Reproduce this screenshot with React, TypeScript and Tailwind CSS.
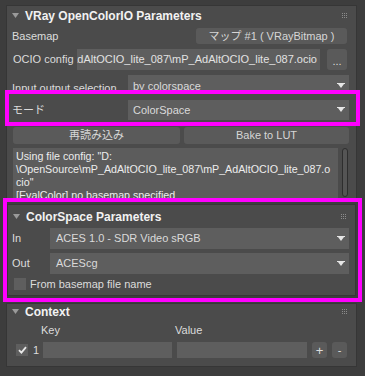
import React from "react";

const font = "font-['Liberation_Sans','Noto_Sans_CJK_JP',sans-serif]";

const Caret = () => (
  <svg width="7" height="6" viewBox="0 0 7 6" className="shrink-0">
    <polygon points="0,0 7,0 3.5,5" fill="#9a9a9a" />
  </svg>
);

const DropArrow = () => (
  <svg width="8" height="6" viewBox="0 0 8 6" className="shrink-0">
    <rect x="0" y="0" width="8" height="1" fill="#e6e6e6" />
    <polygon points="1,1 7,1 4,5" fill="#e6e6e6" />
  </svg>
);

const GripDots = () => (
  <svg width="6" height="6" viewBox="0 0 6 6" className="shrink-0">
    {[0, 2, 4].map((y) =>
      [0, 2, 4].map((x) => (
        <rect key={`${x}-${y}`} x={x} y={y} width="1" height="1" fill="#8c8c8c" />
      ))
    )}
  </svg>
);

const Dropdown: React.FC<{ value: string; className: string }> = ({ value, className }) => (
  <div
    className={`flex shrink-0 items-center justify-between bg-[#5e5e5e] pl-[5px] pr-[4px] text-[11px] text-[#dadada] ${className}`}
  >
    <span className="whitespace-nowrap">{value}</span>
    <DropArrow />
  </div>
);

const RolloutTitle: React.FC<{ title: string; className: string }> = ({ title, className }) => (
  <div className={`flex items-center pl-[5px] pr-[8px] ${className}`}>
    <Caret />
    <span className="ml-[6px] flex-1 text-[12px] font-bold text-[#f2f2f2]">{title}</span>
    <GripDots />
  </div>
);

export default function App() {
  return (
    <div className={`h-[376px] w-[365px] overflow-hidden bg-[#3d3d3d] pt-[5px] ${font}`}>
      {/* VRay OpenColorIO Parameters */}
      <div className="ml-[6px] h-[193px] w-[351px] border-x border-t border-[#363636] bg-[#4b4b4b]">
        <RolloutTitle title="VRay OpenColorIO Parameters" className="h-[20px]" />

        <div className="mt-[2px] flex h-[16px] items-center justify-between pl-[5px] pr-[9px] text-[11px] text-[#dcdcdc]">
          <span>Basemap</span>
          <div className="flex h-[16px] w-[151px] shrink-0 items-center justify-center rounded-[3px] bg-[#5a5a5a] text-[#d6d6d6]">
            マップ #1 ( VRayBitmap )
          </div>
        </div>

        <div className="mt-[5px] flex h-[21px] items-center pl-[6px] pr-[9px] text-[11px] text-[#dcdcdc]">
          <span className="w-[64px] shrink-0 whitespace-nowrap">OCIO config</span>
          <div className="flex h-[21px] w-[243px] shrink-0 items-center justify-end overflow-hidden bg-[#5e5e5e] pr-[3px] text-[#e2e2e2]">
            <span className="whitespace-nowrap">AdAltOCIO_lite_087\mP_AdAltOCIO_lite_087.ocio</span>
          </div>
          <div className="ml-[7px] flex h-[21px] w-[20px] shrink-0 items-end justify-center rounded-[3px] bg-[#5a5a5a] pb-[3px] leading-none text-[#dcdcdc]">
            ...
          </div>
        </div>

        <div className="mt-[5px] flex h-[15px] items-start justify-between pl-[5px] pr-[7px] text-[11px] text-[#dcdcdc]">
          <span className="mt-[5px] whitespace-nowrap">Input output selection</span>
          <Dropdown value="by colorspace" className="h-[22px] w-[221px]" />
        </div>

        <div className="relative -ml-[2px] -mr-[4px] flex h-[36px] items-center border-4 border-[#ff00ff] bg-[#4b4b4b] pt-[4px] pl-[3px] pr-[7px] text-[11px] text-[#dcdcdc]">
          <span className="flex-1">モード</span>
          <Dropdown value="ColorSpace" className="h-[20px] w-[221px]" />
        </div>

        <div className="mt-[1px] flex h-[17px] gap-[4px] pl-[6px] pr-[7px] text-[11px] text-[#d6d6d6]">
          <div className="flex w-[167px] items-center justify-center rounded-[3px] bg-[#5a5a5a]">再読み込み</div>
          <div className="flex w-[165px] items-center justify-center rounded-[3px] bg-[#5a5a5a]">Bake to LUT</div>
        </div>

        <div className="mt-[4px] flex h-[50px] gap-[4px] pl-[6px]">
          <div className="h-[50px] w-[325px] shrink-0 overflow-hidden bg-[#5c5c5c] pl-[3px] pt-[2px] text-[10.7px] leading-[13px] text-[#ececec]">
            <div className="whitespace-nowrap">Using file config: "D:</div>
            <div className="whitespace-nowrap">\OpenSource\mP_AdAltOCIO_lite_087\mP_AdAltOCIO_lite_087.o</div>
            <div className="whitespace-nowrap">cio"</div>
            <div className="whitespace-nowrap">[EvalColor] no basemap specified</div>
          </div>
          <div className="h-[49px] w-[6px] shrink-0 rounded-full border border-[#2e2e2e] bg-[#555555]" />
        </div>
      </div>

      {/* ColorSpace Parameters, highlighted */}
      <div className="ml-[3px] h-[104px] w-[359px] border-4 border-[#ff00ff] pt-[2px] pr-[2px]">
        <div className="h-[92px] w-[349px] border border-[#363636] bg-[#4b4b4b]">
          <RolloutTitle title="ColorSpace Parameters" className="h-[23px] pl-[4px] pr-[7px]" />

          <div className="flex h-[21px] items-center pl-[4px] text-[11px] text-[#dcdcdc]">
            <span className="w-[38px] shrink-0">In</span>
            <Dropdown value="ACES 1.0 - SDR Video sRGB" className="h-[21px] w-[299px] pl-[6px]" />
          </div>

          <div className="mt-[4px] flex h-[21px] items-center pl-[4px] text-[11px] text-[#dcdcdc]">
            <span className="w-[38px] shrink-0">Out</span>
            <Dropdown value="ACEScg" className="h-[21px] w-[299px] pl-[6px]" />
          </div>

          <div className="mt-[3px] flex h-[14px] items-center pl-[6px] text-[11px] text-[#dcdcdc]">
            <div className="h-[12px] w-[12px] bg-[#5e5e5e]" />
            <span className="ml-[4px]">From basemap file name</span>
          </div>
        </div>
      </div>

      {/* Context */}
      <div className="ml-[6px] mt-[1px] h-[64px] w-[351px] border border-[#363636] bg-[#4b4b4b]">
        <RolloutTitle title="Context" className="h-[16px]" />

        <div className="flex h-[20px] items-center text-[11px] text-[#dcdcdc]">
          <span className="ml-[34px] w-[134px]">Key</span>
          <span>Value</span>
        </div>

        <div className="mt-[2px] flex h-[16px] items-center pl-[9px] text-[11px] text-[#dcdcdc]">
          <div className="flex h-[12px] w-[12px] shrink-0 items-center justify-center bg-[#5e5e5e]">
            <svg width="9" height="8" viewBox="0 0 9 8">
              <path d="M1 4.2 L3.4 6.6 L8 1.2" stroke="#e8e8e8" strokeWidth="1.8" fill="none" />
            </svg>
          </div>
          <span className="ml-[5px] w-[10px] shrink-0">1</span>
          <div className="h-[16px] w-[129px] shrink-0 bg-[#5e5e5e]" />
          <div className="ml-[5px] h-[16px] w-[130px] shrink-0 bg-[#5e5e5e]" />
          <div className="ml-[5px] flex h-[16px] w-[15px] shrink-0 items-center justify-center rounded-[3px] bg-[#5a5a5a] text-[13px] leading-none">
            +
          </div>
          <div className="ml-[5px] flex h-[16px] w-[15px] shrink-0 items-center justify-center rounded-[3px] bg-[#5a5a5a] leading-none">
            -
          </div>
        </div>
      </div>
    </div>
  );
}
